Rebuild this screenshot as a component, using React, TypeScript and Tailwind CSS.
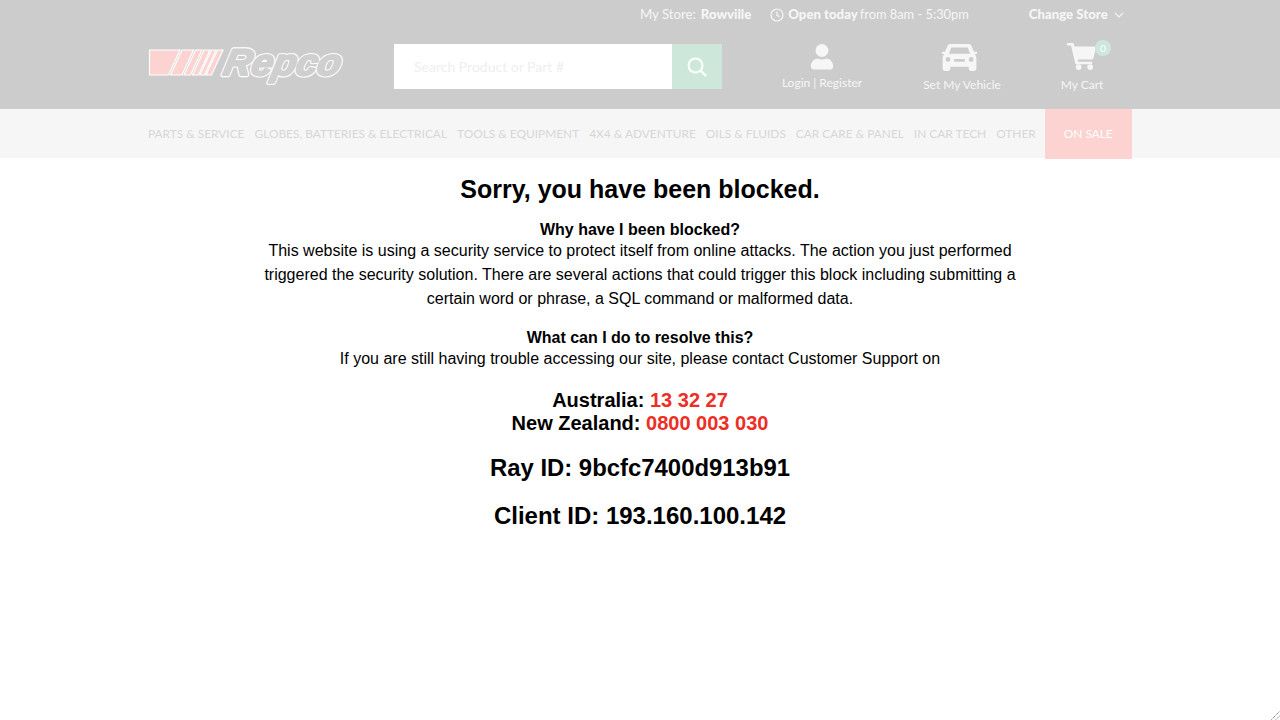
const NAV_ITEMS = [
  "Parts & Service",
  "Globes, Batteries & Electrical",
  "Tools & Equipment",
  "4x4 & Adventure",
  "Oils & Fluids",
  "Car Care & Panel",
  "In Car Tech",
  "Other",
];

function Logo() {
  return (
    <svg width="200" height="50" viewBox="0 0 200 50" className="block">
      <g fill="#fcd3d0" stroke="#fff" strokeWidth="1.2">
        <path d="M1.5 13H32L20.5 38H1.5Z" />
        <path d="M34 13H45.5L34 38H22.5Z" />
        <path d="M47.5 13H54L42.5 38H36Z" />
        <path d="M56 13H62L50.5 38H44.5Z" />
        <path d="M63.5 13H68L56.5 38H52Z" />
        <path d="M69.5 13H75L63.5 38H58Z" />
      </g>
      <g
        fontFamily="'Liberation Sans', sans-serif"
        fontSize="37"
        fontWeight="700"
        fontStyle="italic"
        strokeLinejoin="round"
      >
        <text transform="translate(74 38) skewX(-12)" fill="#fff" stroke="#fff" strokeWidth="4.4" textLength="117" lengthAdjust="spacingAndGlyphs">
          Repco
        </text>
        <text transform="translate(74 38) skewX(-12)" fill="#cfcfcf" stroke="#cfcfcf" strokeWidth="2.2" textLength="117" lengthAdjust="spacingAndGlyphs" aria-hidden="true">
          Repco
        </text>
      </g>
    </svg>
  );
}

function ClockIcon() {
  return (
    <svg width="14" height="14" viewBox="0 0 14 14" fill="none" stroke="#f6f6f6" strokeWidth="1.2">
      <circle cx="7" cy="7" r="6" />
      <path d="M7 3.5V7.3L9.5 8.8" />
    </svg>
  );
}

function SearchIcon() {
  return (
    <svg width="22" height="22" viewBox="0 0 22 22" fill="none" stroke="#fff" strokeWidth="2">
      <circle cx="9.5" cy="9.5" r="7" />
      <path d="M14.5 14.5L20 20" strokeWidth="2.4" />
    </svg>
  );
}

function UserIcon() {
  return (
    <svg width="24" height="26" viewBox="0 0 24 28" fill="#f6f6f6">
      <circle cx="12" cy="7" r="7" />
      <path d="M0 24C0 18.5 4 15.5 7.5 15.5C10.5 17 13.5 17 16.5 15.5C20 15.5 24 18.5 24 24C24 26.5 22.5 27.5 21 27.5H3C1.5 27.5 0 26.5 0 24Z" />
    </svg>
  );
}

function CarIcon() {
  return (
    <svg width="37" height="27" viewBox="0 0 37 28" fill="#f6f6f6" className="mr-[5px]">
      <path
        fillRule="evenodd"
        d="M9 0H28C29.5 0 30.5 1 31 2L33.5 8H36.5C36.9 8 37 9.5 36.5 10L34.5 10.5C35.5 12 36 13 36 15V25C36 27 35 28 33.5 28H30.5C29 28 28 27 28 25V23.5H9V25C9 27 8 28 6.5 28H3.5C2 28 1 27 1 25V15C1 13 1.5 12 2.5 10.5L0.5 10C0 9.5 0.1 8 0.5 8H3.5L6 2C6.5 1 7.5 0 9 0ZM10 3.5L7.5 10H29.5L27 3.5ZM6.5 13.5A2.5 2.5 0 1 0 6.6 18.5A2.5 2.5 0 1 0 6.5 13.5ZM30.5 13.5A2.5 2.5 0 1 0 30.6 18.5A2.5 2.5 0 1 0 30.5 13.5ZM13 15.5V18.5H24V15.5Z"
      />
    </svg>
  );
}

function CartIcon() {
  return (
    <svg width="29" height="27" viewBox="0 0 30 28" fill="#f6f6f6" className="mr-[1px]">
      <path d="M0 0H5.5C6.5 0 7 .6 7.2 1.4L7.8 3.5H28.5C29.5 3.5 30 4.3 29.8 5.2L27.5 15.5C27.3 16.4 26.7 17 25.8 17H11L11.6 19.5H26V22H9.8C9 22 8.5 21.5 8.3 20.7L4.2 2.5H0Z" />
      <circle cx="12" cy="25" r="3" />
      <circle cx="24" cy="25" r="3" />
    </svg>
  );
}

function ChevronIcon() {
  return (
    <svg width="10" height="6" viewBox="0 0 10 6" fill="none" stroke="#f6f6f6" strokeWidth="1.2">
      <path d="M.8.8L5 5L9.2.8" />
    </svg>
  );
}

export default function App() {
  return (
    <div className="relative min-h-[720px] bg-white font-['Liberation_Sans',Arial,sans-serif] text-black">
      <header className="h-[109px] bg-[#cccccc] font-['Lato',sans-serif] text-[#f6f6f6]">
        <div className="flex h-[30px] items-center pl-[640px] text-[13.2px]">
          <span>My Store:</span>
          <span className="ml-[5px] font-black">Rowville</span>
          <span className="ml-[19px]"><ClockIcon /></span>
          <span className="ml-[4px] font-black">Open today</span>
          <span className="ml-[2px] text-[12.85px]">from 8am - 5:30pm</span>
          <span className="ml-[60px] font-black">Change Store</span>
          <span className="ml-[6px]"><ChevronIcon /></span>
        </div>
        <div className="flex pl-[148px]">
          <div className="mt-[7px] w-[246px]"><Logo /></div>
          <div className="mt-[14px] flex h-[45px] w-[328px]">
            <div className="flex w-[278px] items-center bg-white pl-[20px] text-sm text-[#f0eeee]">
              Search Product or Part #
            </div>
            <div className="flex w-[50px] items-center justify-center bg-[#cde8da]">
              <SearchIcon />
            </div>
          </div>
          <div className="ml-[60px] mt-[14px] flex w-[80px] flex-col items-center">
            <UserIcon />
            <span className="mt-[5px] whitespace-nowrap text-xs">Login | Register</span>
          </div>
          <div className="ml-[60px] mt-[14px] flex w-[80px] flex-col items-center">
            <CarIcon />
            <span className="mt-[6px] whitespace-nowrap text-xs">Set My Vehicle</span>
          </div>
          <div className="ml-[40px] mt-[13px] flex w-[80px] flex-col items-center">
            <div className="relative">
              <CartIcon />
              <span className="absolute -right-[14px] -top-[3px] flex h-4 w-4 items-center justify-center rounded-full bg-[#cde8da] text-[10px] text-white">
                0
              </span>
            </div>
            <span className="mt-[7px] whitespace-nowrap text-xs">My Cart</span>
          </div>
        </div>
      </header>

      <nav className="flex h-[49px] items-center bg-[#f6f6f6] pl-[148px] font-['Lato',sans-serif] text-[11.9px] uppercase text-[#d6d6d6]">
        {NAV_ITEMS.map((item) => (
          <a key={item} className="mr-[10px] whitespace-nowrap">
            {item}
          </a>
        ))}
        <a className="-ml-[1px] flex h-[50px] w-[87px] items-center justify-center self-start bg-[#fcd3d0] text-white">
          On Sale
        </a>
      </nav>

      <main className="text-center">
        <h1 className="mt-[15px] text-[25px] font-bold leading-[32px]">Sorry, you have been blocked.</h1>
        <h2 className="mt-[13px] text-base font-bold leading-[24px]">Why have I been blocked?</h2>
        <p className="mx-auto -mt-[3px] w-[760px] text-base leading-[24px]">
          This website is using a security service to protect itself from online attacks. The action you just performed
          triggered the security solution. There are several actions that could trigger this block including submitting a
          certain word or phrase, a SQL command or malformed data.
        </p>
        <h2 className="mt-[15px] text-base font-bold leading-[24px]">What can I do to resolve this?</h2>
        <p className="-mt-[3px] text-base leading-[24px]">
          If you are still having trouble accessing our site, please contact Customer Support on
        </p>
        <p className="mt-[17px] text-xl font-bold leading-[24px]">
          Australia: <span className="text-[#ee2e24]">13 32 27</span>
        </p>
        <p className="-mt-[1px] text-xl font-bold leading-[24px]">
          New Zealand: <span className="text-[#ee2e24]">0800 003 030</span>
        </p>
        <p className="mt-[17px] text-[23.9px] font-bold leading-[32px]">Ray ID: 9bcfc7400d913b91</p>
        <p className="mt-[16px] text-2xl font-bold leading-[32px]">Client ID: 193.160.100.142</p>
      </main>

      <svg width="9" height="9" viewBox="0 0 9 9" className="absolute bottom-[0px] right-[0px]" stroke="#555" fill="none">
        <path d="M0.5 8.5L8.5 0.5" strokeDasharray="1 1" />
        <path d="M5 8.5L8.5 5" strokeDasharray="1 1" />
      </svg>
    </div>
  );
}
